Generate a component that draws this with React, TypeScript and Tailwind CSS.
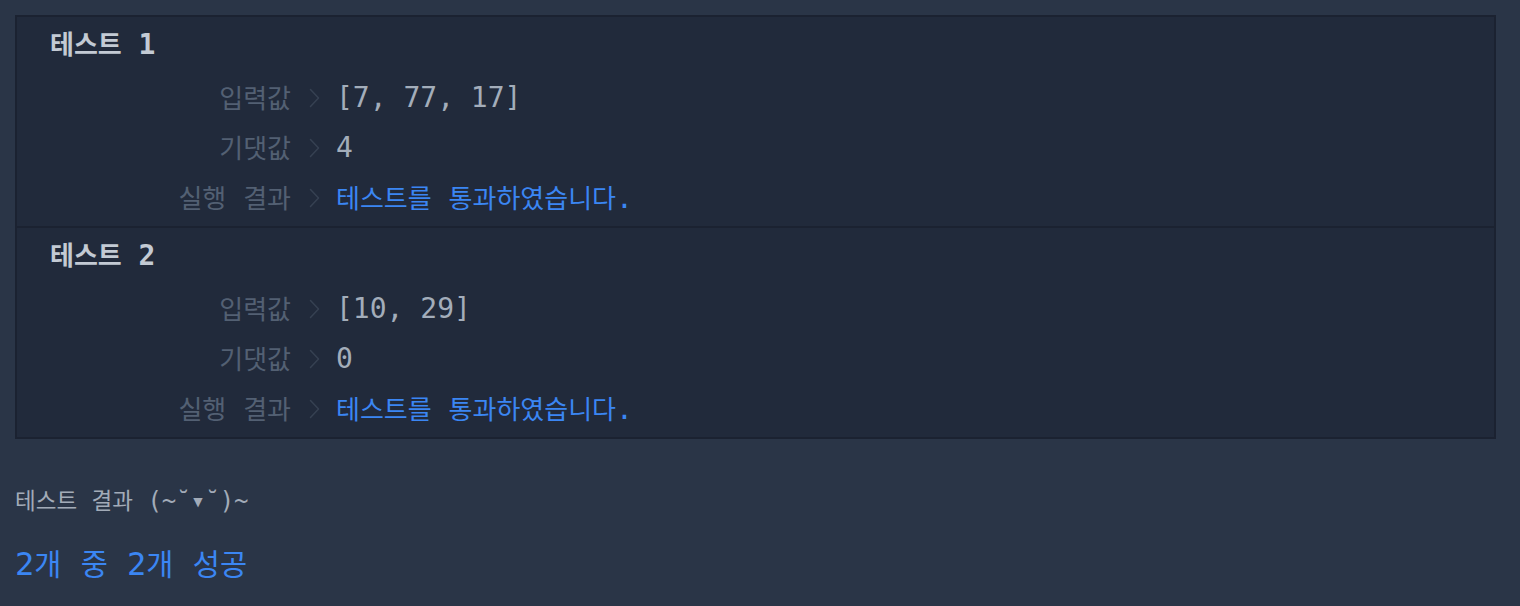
import React from 'react';

// Hangul runs get a smaller font so their advance matches the mixed mono look
const Mixed: React.FC<{ text: string; k: string }> = ({ text, k }) => {
  const parts = text.split(/([\uAC00-\uD7A3]+)/);
  return (
    <span className="whitespace-pre">
      {parts.map((p, i) =>
        /[\uAC00-\uD7A3]/.test(p) ? (
          <span key={i} className={`font-['Noto_Sans_CJK_KR',sans-serif] ${k}`}>
            {p}
          </span>
        ) : (
          <span key={i}>{p}</span>
        )
      )}
    </span>
  );
};

const Chevron: React.FC = () => (
  <svg width="11" height="20" viewBox="0 0 11 20" fill="none" className="ml-[18px] shrink-0">
    <path d="M1.5 1.5 L9.5 10 L1.5 18.5" stroke="#364152" strokeWidth="1.5" strokeLinecap="round" strokeLinejoin="round" />
  </svg>
);

interface TestCase {
  input: string;
  expected: string;
}

const CASES: TestCase[] = [
  { input: '[7, 77, 17]', expected: '4' },
  { input: '[10, 29]', expected: '0' },
];

const Row: React.FC<{ label: string; children: React.ReactNode }> = ({ label, children }) => (
  <div className="flex items-center h-[50px]">
    <div className="w-[274px] text-right text-[#536073]">
      <Mixed text={label} k="text-[26px]" />
    </div>
    <Chevron />
    <div className="ml-[16px]">{children}</div>
  </div>
);

const TestBlock: React.FC<{ idx: number; tc: TestCase; last: boolean }> = ({ idx, tc, last }) => (
  <div className={`pb-[3px] ${last ? '' : 'border-b-2 border-[#1b2231]'}`}>
    <div className="h-[56px] pl-[33px] flex items-center pb-[1px] text-[#c3cad4] font-semibold">
      <Mixed text={`테스트 ${idx}`} k="text-[26px]" />
    </div>
    <Row label="입력값">
      <span className="text-[#a3adba]">{tc.input}</span>
    </Row>
    <Row label="기댓값">
      <span className="text-[#a3adba]">{tc.expected}</span>
    </Row>
    <Row label="실행 결과">
      <span className="text-[#3b86f3]">
        <Mixed text="테스트를 통과하였습니다." k="text-[26px]" />
      </span>
    </Row>
  </div>
);

export default function App() {
  return (
    <div className="w-[1520px] h-[606px] bg-[#2a3547] pl-[15px] pr-[24px] pt-[15px] font-['DejaVu_Sans_Mono','Noto_Sans_CJK_KR',monospace] overflow-hidden">
      <div className="bg-[#212a3b] border-2 border-[#1b2231] text-[28px] leading-none">
        {CASES.map((tc, i) => (
          <TestBlock key={i} idx={i + 1} tc={tc} last={i === CASES.length - 1} />
        ))}
      </div>
      <div className="mt-[46px] h-[32px] flex items-center text-[24px] text-[#a2abb8]">
        <Mixed text="테스트 결과 (~˘▾˘)~" k="text-[22.5px]" />
      </div>
      <div className="mt-[25px] h-[44px] flex items-center text-[32px] text-[#3b86f3]">
        <Mixed text="2개 중 2개 성공" k="text-[29.5px]" />
      </div>
    </div>
  );
}
